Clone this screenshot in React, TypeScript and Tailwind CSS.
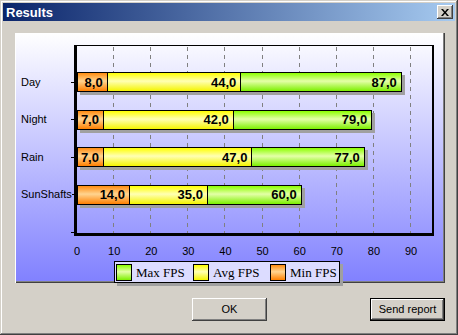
import React from 'react'

interface Row {
  name: string
  max: number
  avg: number
  min: number
}

const rows: Row[] = [
  { name: 'Day', max: 87, avg: 44, min: 8 },
  { name: 'Night', max: 79, avg: 42, min: 7 },
  { name: 'Rain', max: 77, avg: 47, min: 7 },
  { name: 'SunShafts', max: 60, avg: 35, min: 14 },
]

// px per FPS unit on the x axis
const SCALE = 3.711
const ticks = [0, 10, 20, 30, 40, 50, 60, 70, 80, 90]

const fmt = (v: number) => v.toFixed(1).replace('.', ',')

const GREEN = 'bg-[linear-gradient(to_bottom,#8cff00,#e4ffa8_45%,#7cf000)]'
const YELLOW = 'bg-[linear-gradient(to_bottom,#ffff00,#ffffb4_45%,#f4f400)]'
const ORANGE = 'bg-[linear-gradient(to_bottom,#ff8c10,#ffd490_45%,#ff8000)]'

function Segment({ value, width, color }: { value: number; width: number; color: string }) {
  return (
    <div
      className={`h-full shrink-0 flex items-center justify-end pr-[4px] ${color}`}
      style={{ width }}
    >
      <span className="text-[13px] font-bold leading-none text-black whitespace-nowrap">{fmt(value)}</span>
    </div>
  )
}

function BarRow({ r }: { r: Row }) {
  return (
    <div className="h-[20px] flex">
      <div className="h-full flex border border-black divide-x divide-black shadow-[3px_3px_0_#a0a0a0]">
        <Segment value={r.min} width={r.min * SCALE} color={ORANGE} />
        <Segment value={r.avg} width={(r.avg - r.min) * SCALE} color={YELLOW} />
        <Segment value={r.max} width={(r.max - r.avg) * SCALE} color={GREEN} />
      </div>
    </div>
  )
}

function Chart() {
  return (
    <div className="w-[430px] h-[250px] ml-[12px] mt-[12px] pt-[12px] flex flex-col bg-[linear-gradient(to_bottom,#ffffff,#8080ff)] shadow-[inset_1px_0_#ffffff,inset_-1px_-1px_#404040,inset_-2px_-2px_#808080]">
      <div className="flex">
        {/* category labels with ticks */}
        <div className="w-[59px] flex flex-col pt-[27px] gap-[17.6px]">
          {[...rows.map(r => r.name), ''].map((name, i) => (
            <div key={i} className="h-[20px] flex items-center justify-between pl-[6px]">
              <span className="text-[11px] leading-none text-black">{name}</span>
              <div className="w-[3px] h-px bg-black" />
            </div>
          ))}
        </div>

        {/* plot area */}
        <div className="relative w-[360px] h-[191px] border-l-[3px] border-b-[3px] border-t border-r-2 border-black">
          {ticks.slice(1).map(t => (
            <div
              key={t}
              className="absolute top-[1px] bottom-0 w-px bg-[repeating-linear-gradient(to_bottom,#808080_0_4px,transparent_4px_8px)]"
              style={{ left: t * SCALE - 1 }}
            />
          ))}
          <div className="relative flex flex-col pt-[26px] gap-[17.6px]">
            {rows.map(r => (
              <BarRow key={r.name} r={r} />
            ))}
          </div>
        </div>
      </div>

      {/* x axis labels */}
      <div className="flex pl-[43.5px] mt-[4px]">
        {ticks.map(t => (
          <div key={t} className="w-[37.11px] shrink-0 text-center text-[11px] leading-none text-black">
            {t}
          </div>
        ))}
      </div>

      {/* legend */}
      <div className="ml-[99px] mt-[4px] w-[226px] h-[24px] border border-black bg-[#dcdcff] shadow-[3px_3px_0_#a0a0a0] flex items-center pl-[1px] gap-[6px] font-['Liberation_Serif',serif] text-[13px] text-black">
        {[
          { c: GREEN, t: 'Max FPS' },
          { c: YELLOW, t: 'Avg FPS' },
          { c: ORANGE, t: 'Min FPS' },
        ].map(l => (
          <div key={l.t} className="flex items-center gap-[4px]">
            <div className={`w-[16px] h-[17px] border border-black ${l.c}`} />
            <span className="leading-none w-[51px]">{l.t}</span>
          </div>
        ))}
      </div>
    </div>
  )
}

function Button({ label, isDefault }: { label: string; isDefault?: boolean }) {
  return (
    <div
      className={`w-[75px] h-[23px] flex items-center justify-center text-[11px] text-black bg-[#d4d0c8] shadow-[inset_-1px_-1px_#404040,inset_1px_1px_#ffffff,inset_-2px_-2px_#808080] ${
        isDefault ? 'border border-black' : ''
      }`}
    >
      {label}
    </div>
  )
}

export default function App() {
  return (
    <div className="w-[458px] h-[335px] bg-[#d4d0c8] p-[3px] font-['Liberation_Sans',Arial,sans-serif] shadow-[inset_-1px_-1px_#404040,inset_1px_1px_#d4d0c8,inset_-2px_-2px_#808080,inset_2px_2px_#ffffff] flex flex-col">
      <div className="h-[18px] flex items-center justify-between bg-[linear-gradient(to_right,#0a246a,#a6caf0)] pl-[3px] pr-[2px]">
        <span className="text-white font-bold text-[13px] leading-none">Results</span>
        <div className="w-[16px] h-[14px] bg-[#d4d0c8] flex items-center justify-center shadow-[inset_-1px_-1px_#404040,inset_1px_1px_#ffffff,inset_-2px_-2px_#808080]">
          <svg width="8" height="7" viewBox="0 0 8 7">
            <path d="M0 0h2l2 2.5L6 0h2L5 3.5 8 7H6L4 4.5 2 7H0l3-3.5z" fill="#000" />
          </svg>
        </div>
      </div>
      <Chart />
      <div className="flex justify-end gap-[103px] pr-[10px] mt-[15px]">
        <Button label="OK" />
        <Button label="Send report" isDefault />
      </div>
    </div>
  )
}
